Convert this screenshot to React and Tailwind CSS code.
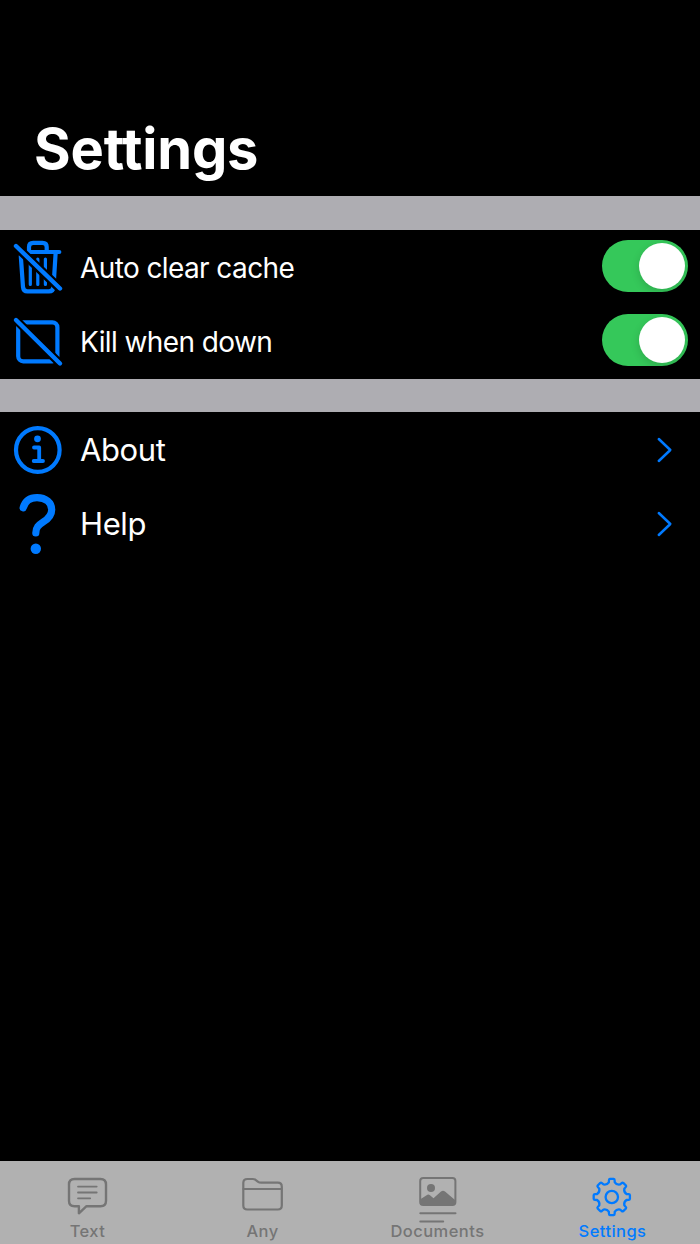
import { useState } from 'react';

const TrashSlashIcon = () => (
    <svg className="w-20 h-[74px] shrink-0" viewBox="0 230 80 74" fill="none" stroke="#007aff" strokeLinecap="round" strokeLinejoin="round">
        <mask id="trash-cut" maskUnits="userSpaceOnUse" x="0" y="230" width="80" height="74">
            <rect x="0" y="230" width="80" height="74" fill="white" stroke="none" />
            <path d="M10 240.5L66 294.5" stroke="black" strokeWidth="9" />
        </mask>
        <g mask="url(#trash-cut)" strokeWidth="4.2">
            <path d="M29 252V247Q29 242.8 33.2 242.8H42.5Q46.7 242.8 46.7 247V252" />
            <path d="M29 252H59.3" />
            <path d="M20.8 256L23 287Q23.3 291.4 27.5 291.4H49Q53.2 291.4 53.5 287L55.7 252" />
            <path d="M30.3 259V284.5M37.8 259V284.5M45.4 259V284.5" strokeWidth="3.2" />
        </g>
        <path d="M16 246L60 288.5" strokeWidth="4.4" />
    </svg>
);

const SquareSlashIcon = () => (
    <svg className="w-20 h-[74px] shrink-0" viewBox="0 304 80 74" fill="none" stroke="#007aff" strokeLinecap="round" strokeLinejoin="round">
        <mask id="square-cut" maskUnits="userSpaceOnUse" x="0" y="304" width="80" height="74">
            <rect x="0" y="304" width="80" height="74" fill="white" stroke="none" />
            <path d="M10 314L66 369.5" stroke="black" strokeWidth="8.5" />
        </mask>
        <rect x="18.2" y="322.3" width="39.2" height="39" rx="5" strokeWidth="4.2" mask="url(#square-cut)" />
        <path d="M16 320L60 363.5" strokeWidth="4.4" />
    </svg>
);

const InfoIcon = () => (
    <svg className="w-20 h-[74px] shrink-0" viewBox="0 413 80 74" fill="none" stroke="#007aff" strokeLinecap="round" strokeLinejoin="round">
        <circle cx="37.8" cy="450" r="21.8" strokeWidth="4.2" />
        <circle cx="37.5" cy="438.8" r="3.4" fill="#007aff" stroke="none" />
        <path d="M34 447.5H39.2V461M33.7 461H43" strokeWidth="3.8" />
    </svg>
);

const QuestionIcon = () => (
    <svg className="w-20 h-[74px] shrink-0" viewBox="0 487 80 74" fill="none" stroke="#007aff" strokeLinecap="round" strokeLinejoin="round">
        <path d="M23.2 507.8C25 501.3 30 497.7 37 497.7C46 497.7 51.7 502.8 51.7 509.7C51.7 515.5 48.5 518.6 43.5 521.8C38.3 525.2 35.8 527.7 35.8 533" strokeWidth="7.2" />
        <circle cx="35.8" cy="548.8" r="5.2" fill="#007aff" stroke="none" />
    </svg>
);

const Chevron = () => (
    <svg className="w-[18px] h-7 mr-[26px]" viewBox="0 0 18 28" fill="none" stroke="#007aff" strokeWidth="2.5" strokeLinecap="round" strokeLinejoin="round">
        <path d="M2.8 3L14.3 14L2.8 25" />
    </svg>
);

const Toggle = ({ on, onChange }) => (
    <button
        role="switch"
        aria-checked={on}
        onClick={onChange}
        className={`w-[86px] h-[52px] mr-3 mb-0.5 p-[3px] rounded-full flex items-center ${on ? 'bg-[#35c85a] justify-end' : 'bg-[#39393d] justify-start'}`}
    >
        <span className="w-[46px] h-[46px] rounded-full bg-white shadow-[0_3px_8px_rgba(0,0,0,0.15)]" />
    </button>
);

const TextIcon = () => (
    <svg className="w-[44px] h-[62px]" viewBox="66 1161 44 62" fill="none" stroke="currentColor" strokeWidth="2.4" strokeLinecap="round" strokeLinejoin="round">
        <path d="M74.5 1179H100.5Q106 1179 106 1184.5V1200.7Q106 1206.2 100.5 1206.2H86.5L78.9 1213.3V1206.2H74.5Q69 1206.2 69 1200.7V1184.5Q69 1179 74.5 1179Z" />
        <path d="M78 1186.6H96.7M78 1192.5H96.7M78 1198.3H90.2" strokeWidth="1.8" />
    </svg>
);

const FolderIcon = () => (
    <svg className="w-[44px] h-[62px]" viewBox="241 1161 44 62" fill="none" stroke="currentColor" strokeWidth="2.2" strokeLinecap="round" strokeLinejoin="round">
        <path d="M243.3 1205.5V1183Q243.3 1179 247.3 1179H252.5Q254.7 1179 256.2 1180.3L257.8 1181.6Q259.2 1182.7 261.2 1182.7H277.8Q281.8 1182.7 281.8 1186.7V1205.5Q281.8 1209.5 277.8 1209.5H247.3Q243.3 1209.5 243.3 1205.5Z" />
        <path d="M243.5 1189H281.6" />
    </svg>
);

const DocumentsIcon = () => (
    <svg className="w-[44px] h-[62px]" viewBox="416 1161 44 62" fill="none" stroke="currentColor" strokeWidth="2" strokeLinecap="round" strokeLinejoin="round">
        <rect x="420.2" y="1178" width="35.2" height="27" rx="3" />
        <circle cx="431" cy="1188" r="4" fill="currentColor" stroke="none" />
        <path d="M420 1199.5L426.6 1195.2Q428.3 1194 430 1195.2L433.5 1198.2L441 1191.6Q443 1190 445 1191.6L455.6 1200.5V1202Q455.6 1205 452.6 1205H423Q420 1205 420 1202Z" fill="currentColor" stroke="none" />
        <path d="M420.3 1213.3H455.5M420.3 1221.6H443.2" />
    </svg>
);

const polar = (r, deg) => {
    const a = (deg * Math.PI) / 180;
    return `${(r * Math.sin(a)).toFixed(2)} ${(-r * Math.cos(a)).toFixed(2)}`;
};

// eight rounded teeth, one every 45 degrees
const gearPath = [0, 45, 90, 135, 180, 225, 270, 315].map((t, i) =>
    `${i === 0 ? 'M' : 'L'}${polar(15, t - 11.5)}L${polar(17, t - 9.5)}Q${polar(18.2, t - 9)} ${polar(18.2, t - 6)}L${polar(18.2, t + 6)}Q${polar(18.2, t + 9)} ${polar(17, t + 9.5)}L${polar(15, t + 11.5)}Q${polar(12.8, t + 22.5)} ${polar(15, t + 33.5)}`
).join('') + 'Z';

const GearIcon = () => (
    <svg className="w-[44px] h-[62px]" viewBox="-20.8 -36 44 62" fill="none" stroke="currentColor" strokeWidth="2.3" strokeLinecap="round" strokeLinejoin="round">
        <path d={gearPath} />
        <circle cx="0" cy="0" r="6.2" />
    </svg>
);

const tabs = [
    { id: 'text', label: 'Text', icon: TextIcon },
    { id: 'any', label: 'Any', icon: FolderIcon },
    { id: 'documents', label: 'Documents', icon: DocumentsIcon },
    { id: 'settings', label: 'Settings', icon: GearIcon },
];

const App = () => {
    const [autoClear, setAutoClear] = useState(true);
    const [killWhenDown, setKillWhenDown] = useState(true);
    const [active, setActive] = useState('settings');

    return (
        <div className="w-full h-screen flex flex-col bg-black text-white font-[Inter,sans-serif] overflow-hidden">
            <header className="h-[196px] shrink-0 flex items-end pl-[34px] pb-3">
                <h1 className="text-[56px] leading-[70px] font-bold tracking-[-0.2px]">Settings</h1>
            </header>

            <main className="flex-1">
                <div className="h-[34px] bg-[#aeadb2]" />
                <div className="h-[74px] flex items-center">
                    <TrashSlashIcon />
                    <span className="flex-1 pt-0.5 text-[28px] leading-9 tracking-[-0.6px]">Auto clear cache</span>
                    <Toggle on={autoClear} onChange={() => setAutoClear(!autoClear)} />
                </div>
                <div className="h-[74px] flex items-center">
                    <SquareSlashIcon />
                    <span className="flex-1 pt-0.5 text-[28px] leading-9 tracking-[-0.6px]">Kill when down</span>
                    <Toggle on={killWhenDown} onChange={() => setKillWhenDown(!killWhenDown)} />
                </div>
                <div className="h-[35px] pt-px">
                    <div className="h-[33px] bg-[#aeadb2]" />
                </div>
                <div className="h-[74px] flex items-center">
                    <InfoIcon />
                    <span className="flex-1 text-[31px] leading-9 tracking-[-0.4px]">About</span>
                    <Chevron />
                </div>
                <div className="h-[74px] flex items-center">
                    <QuestionIcon />
                    <span className="flex-1 text-[31px] leading-9 tracking-[-0.4px]">Help</span>
                    <Chevron />
                </div>
            </main>

            <nav className="h-[83px] shrink-0 grid grid-cols-4 bg-[#b1b1b1]">
                {tabs.map(({ id, label, icon: TabIcon }) => (
                    <button
                        key={id}
                        onClick={() => setActive(id)}
                        className={`flex flex-col items-center ${active === id ? 'text-[#007aff]' : 'text-[#757575]'}`}
                    >
                        <TabIcon />
                        <span className="text-[16.5px] leading-4 font-medium tracking-[0.45px]">{label}</span>
                    </button>
                ))}
            </nav>
        </div>
    );
};

export default App;
